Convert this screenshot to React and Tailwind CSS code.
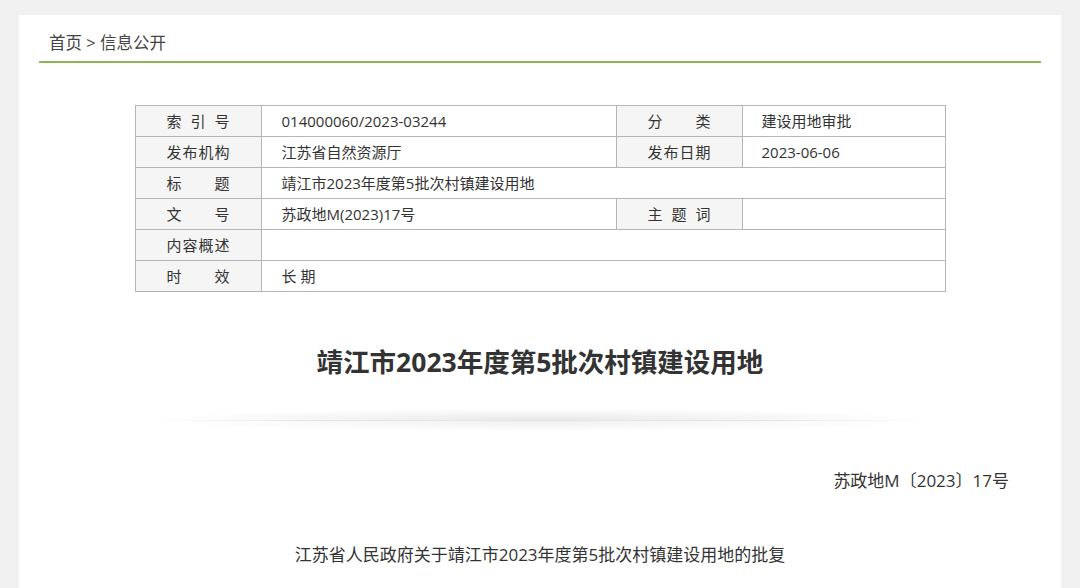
const rows = [
  [['索引号', '014000060/2023-03244'], ['分类', '建设用地审批']],
  [['发布机构', '江苏省自然资源厅'], ['发布日期', '2023-06-06']],
  [['标题', '靖江市2023年度第5批次村镇建设用地']],
  [['文号', '苏政地M(2023)17号'], ['主题词', '']],
  [['内容概述', '']],
  [['时效', '长 期']],
];

const font = { fontFamily: '"Open Sans", "Noto Sans CJK SC", sans-serif' };

// labels are spread evenly over a fixed width, like justified table headers
const Label = ({ text }) => (
  <div className="w-[125px] shrink-0 bg-[#f5f5f5] flex justify-center">
    <div className="w-[63px] flex justify-between">
      {text.split('').map((c, i) => (
        <span key={i}>{c}</span>
      ))}
    </div>
  </div>
);

export default function App() {
  return (
    <div className="min-h-[588px] bg-[#f1f1f1] pt-[15px] px-[19px] text-[#333]" style={font}>
      <div className="bg-white h-[573px] px-[20px]">
        <div className="pt-[17px] pb-[7px] pl-[10px] text-[16.5px] leading-[22px] text-[#444] border-b-[2px] border-[#8bb755]">
          首页 &gt; 信息公开
        </div>

        <div className="mx-auto mt-[42px] w-[811px] border border-[#b5b5b5] text-[15px] leading-[30px]">
          {rows.map((row, i) => (
            <div key={i} className={`flex ${i > 0 ? 'border-t border-[#b5b5b5]' : ''}`}>
              <Label text={row[0][0]} />
              <div className={`${row.length > 1 ? 'w-[355px]' : 'flex-1'} shrink-0 pl-[20px] border-l border-[#b5b5b5]`}>
                {row[0][1]}
              </div>
              {row.length > 1 && (
                <>
                  <div className="border-l border-[#b5b5b5] flex">
                    <Label text={row[1][0]} />
                  </div>
                  <div className="flex-1 pl-[19px] border-l border-[#b5b5b5]">{row[1][1]}</div>
                </>
              )}
            </div>
          ))}
        </div>

        <h1 className="mt-[50px] text-center text-[26.5px] leading-[40px] font-bold text-[#333]">
          靖江市2023年度第5批次村镇建设用地
        </h1>

        <div className="mx-auto mt-[26px] w-[780px] relative h-[24px]">
          <div className="h-[12px] bg-[radial-gradient(ellipse_at_50%_100%,rgba(0,0,0,0.09),rgba(0,0,0,0)_70%)]" />
          <div className="h-px bg-[linear-gradient(90deg,rgba(0,0,0,0),rgba(0,0,0,0.1)_20%,rgba(0,0,0,0.1)_80%,rgba(0,0,0,0))]" />
          <div className="h-[11px] bg-[radial-gradient(ellipse_at_50%_0%,rgba(0,0,0,0.06),rgba(0,0,0,0)_70%)]" />
        </div>

        <div className="mt-[37px] pr-[32px] text-right text-[17px] leading-[24px] text-[#333]">
          苏政地M〔2023〕17号
        </div>

        <div className="mt-[50px] text-center text-[17px] leading-[24px] text-[#333]">
          江苏省人民政府关于靖江市2023年度第5批次村镇建设用地的批复
        </div>
      </div>
    </div>
  );
}
